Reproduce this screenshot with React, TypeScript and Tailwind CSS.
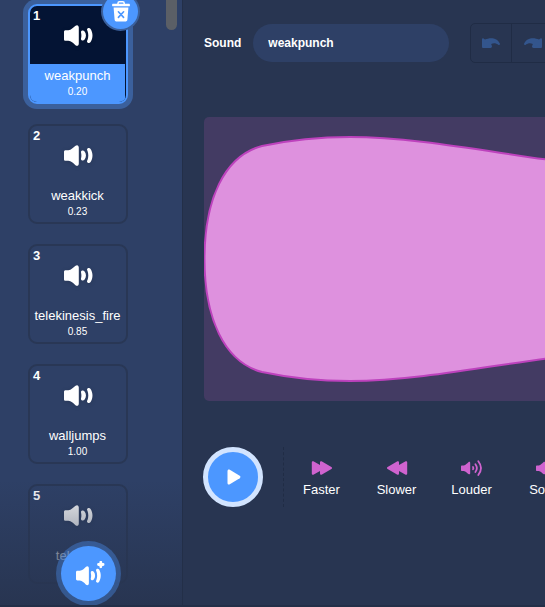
import { useState } from "react";

type Sound = { name: string; duration: string };

const sounds: Sound[] = [
  { name: "weakpunch", duration: "0.20" },
  { name: "weakkick", duration: "0.23" },
  { name: "telekinesis_fire", duration: "0.85" },
  { name: "walljumps", duration: "1.00" },
  { name: "teleport", duration: "0.92" },
];

function SpeakerShape() {
  return (
    <>
      <path d="M1.6 5.2H4.4C7.2 4.8 9.3 2.8 11.2 1 13 -.6 14.8 .2 14.8 2.6V18.4C14.8 20.8 13 21.6 11.2 20 9.3 18.2 7.2 16.2 4.4 15.8H1.6C.6 15.8 0 15.2 0 14.2V6.8C0 5.8.6 5.2 1.6 5.2Z" />
      <path d="M17 6.8C17.2 5.4 19.4 5 20.4 6.2 22.5 8.6 22.5 12.4 20.4 14.8 19.4 16 17.2 15.6 17 14.2 16.9 13.2 17.4 12.4 17.4 10.5S16.9 7.8 17 6.8Z" />
      <path d="M23 4.6C22.8 2.9 25.5 2.2 26.6 3.9 29.1 7.7 29.1 13.3 26.6 17.1 25.5 18.8 22.8 18.1 23 16.4 23.1 15.4 24.3 14 24.3 10.5S23.1 5.6 23 4.6Z" />
    </>
  );
}

function TrashIcon() {
  return (
    <svg viewBox="0 0 18 21" className="h-[21px] w-[18px]" aria-hidden="true">
      <path d="M6 3V2.2C6 1.2 6.6.8 7.4.8H10.8C11.6.8 12.2 1.2 12.2 2.2V3" fill="none" stroke="#fff" strokeWidth="1.5" />
      <path d="M1.2 2.7H16.8C17.5 2.7 17.9 3.1 17.9 3.8V4.4C17.9 5 17.5 5.3 16.8 5.3H1.2C.5 5.3.1 5 .1 4.4V3.8C.1 3.1.5 2.7 1.2 2.7ZM1.6 6.5H16.4L15.4 18.4C15.3 19.8 14.5 20.6 13 20.6H5C3.5 20.6 2.7 19.8 2.6 18.4Z" fill="#fff" />
      <path d="M6.4 10.8L11.6 16.4M11.6 10.8L6.4 16.4" stroke="#4c97ff" strokeWidth="1.6" strokeLinecap="round" />
    </svg>
  );
}

function UndoIcon({ flipped = false }: { flipped?: boolean }) {
  return (
    <svg viewBox="0 0 18 10" className="h-[10px] w-[18px]" fill="#33558c" aria-hidden="true">
      <path
        transform={flipped ? "matrix(-1 0 0 1 18 0)" : undefined}
        d="M0 1.2C0 .2 1.2 0 1.8.8L3 1.6C8-1 15.5-.4 17.9 5.6 18.1 6.9 17 7.4 16.2 6.8 14 5 11.6 4.8 9.2 6L9.8 7.8C10.2 8.8 9.8 10 8.4 10H1.4C.5 10 0 9.5 0 8.5Z"
      />
    </svg>
  );
}

function FastIcon({ flipped = false }: { flipped?: boolean }) {
  return (
    <svg viewBox="0 0 22 16" className="h-4 w-[22px]" fill="#cf63cf" aria-hidden="true">
      <path
        transform={flipped ? "matrix(-1 0 0 1 22 0)" : undefined}
        d="M.8 2.6C.8 1.5 1.8.9 2.8 1.6L9 5V2.6C9 1.5 10 .9 11 1.6L20.4 7C21.3 7.6 21.3 8.4 20.4 9L11 14.4C10 15.1 9 14.5 9 13.4V11L2.8 14.4C1.8 15.1.8 14.5.8 13.4Z"
      />
    </svg>
  );
}

function VolumeIcon({ waves }: { waves: number }) {
  return (
    <svg viewBox="0 0 22 16" className="h-4 w-[22px]" aria-hidden="true">
      <path d="M1 5.4H2.8C4.8 5 6 3.3 7.4 2.2 8.4 1.4 9.2 1.8 9.2 3V13.2C9.2 14.3 8.4 14.7 7.4 14 6 12.8 4.8 11.3 2.8 10.9H1C.4 10.9 0 10.5 0 9.9V6.4C0 5.8.4 5.4 1 5.4Z" fill="#cf63cf" />
      <g fill="none" stroke="#cf63cf" strokeLinecap="round" strokeWidth="1.8">
        <path d="M12 6.9Q12.8 8.1 12 9.3" />
        {waves > 1 && <path d="M14.4 4.2Q17.4 8.1 14.4 12" />}
        {waves > 2 && <path d="M17.3 1.2Q22.7 8.1 17.3 15" />}
      </g>
    </svg>
  );
}

function SoundCard({ sound, index, selected, onSelect }: { sound: Sound; index: number; selected: boolean; onSelect: () => void }) {
  return (
    <li className="relative size-[100px] shrink-0">
      <button
        type="button"
        onClick={onSelect}
        className={
          "relative flex size-full flex-col overflow-hidden rounded-[9px] border-2 " +
          (selected ? "border-[#4c97ff] bg-[#041434] ring-[5px] ring-[#3b609c]" : "border-[#293755]")
        }
      >
        <span className="absolute top-0 left-[3px] text-[13px] leading-5 font-bold">{index + 1}</span>
        <span className="flex h-[58px] w-full shrink-0 items-center justify-center">
          <svg viewBox="0 0 29 21" className="h-[21px] w-[29px] drop-shadow-sm" fill="currentColor" aria-hidden="true">
            <SpeakerShape />
          </svg>
        </span>
        <span className={"flex w-[95px] flex-1 flex-col items-center pt-1 " + (selected ? "bg-[#4c97ff]" : "")}>
          <span className="text-[13px] leading-4">{sound.name}</span>
          <span className="text-[10px] leading-4">{sound.duration}</span>
        </span>
      </button>
      {selected && (
        <button
          type="button"
          aria-label="Delete sound"
          className="absolute -top-2.5 -right-2.5 flex size-[35px] items-center justify-center rounded-full bg-[#4c97ff] ring-2 ring-[#3b609c]"
        >
          <TrashIcon />
        </button>
      )}
    </li>
  );
}

const effects = [
  { label: "Faster", icon: <FastIcon /> },
  { label: "Slower", icon: <FastIcon flipped /> },
  { label: "Louder", icon: <VolumeIcon waves={3} /> },
  { label: "Softer", icon: <VolumeIcon waves={2} /> },
];

export default function App() {
  const [selected, setSelected] = useState(0);
  const [name, setName] = useState("weakpunch");

  return (
    <div className="flex h-screen overflow-hidden border-b-2 border-[#232f48] bg-[#283551] font-['Liberation_Sans',Arial,sans-serif] text-white">
      <aside className="relative w-[183px] shrink-0 overflow-hidden border-r border-[#232f48] bg-[#2e4066]">
        <ul className="flex flex-col gap-5 pt-1 pl-7">
          {sounds.map((sound, i) => (
            <SoundCard key={sound.name} sound={sound} index={i} selected={i === selected} onSelect={() => setSelected(i)} />
          ))}
        </ul>
        <div className="absolute top-0 right-[5px] h-[30px] w-[11px] rounded-b-full bg-[#5b5f66]" />
        <div className="pointer-events-none absolute inset-x-0 bottom-0 h-[125px] bg-linear-to-b from-[#283551]/0 to-[#283551]" />
        <button
          type="button"
          aria-label="Choose a sound"
          className="absolute bottom-1 left-[61px] flex size-[55px] items-center justify-center rounded-full bg-[#4c97ff] ring-[5px] ring-[#4c97ff]/35"
        >
          <svg viewBox="0 0 29 26" className="ml-1 h-[26px] w-[29px]" aria-hidden="true">
            <g fill="#fff" transform="translate(0 5) scale(.87 .92)">
              <SpeakerShape />
            </g>
            <path d="M24.8 1.2V5.8M22.5 3.5H27.1" stroke="#fff" strokeWidth="2.8" strokeLinecap="round" />
          </svg>
        </button>
      </aside>

      <main className="min-w-0 flex-1 overflow-hidden pt-[23px] pl-5">
        <div className="flex items-center pl-px">
          <label htmlFor="sound-name" className="text-[12px] font-bold">
            Sound
          </label>
          <input
            id="sound-name"
            value={name}
            onChange={(e) => setName(e.target.value)}
            className="ml-3 h-[38px] w-[196px] shrink-0 rounded-full bg-[#2e4066] px-[15px] text-[12px] font-bold outline-none"
          />
          <div className="ml-[21px] flex h-10 shrink-0 divide-x divide-[#202c45] rounded-[5px] border border-[#202c45]">
            <button type="button" aria-label="Undo" className="flex w-[41px] items-center justify-center">
              <UndoIcon />
            </button>
            <button type="button" aria-label="Redo" className="flex w-[41px] items-center justify-center">
              <UndoIcon flipped />
            </button>
          </div>
        </div>

        <div className="mt-[54px] ml-px h-[284px] overflow-hidden rounded-l-[5px] bg-[#433b63]">
          <svg viewBox="0 0 700 284" className="h-[284px] w-[700px] max-w-none" role="img" aria-label="Waveform">
            <path
              d="M.5 142C.5 83 20 39 58 29C84 23.5 118 20 146 20C208 20 280 34 342 42.5C460 60 580 90 700 120V164C580 194 460 224 342 241.5C280 250 208 264 146 264C118 264 84 260.5 58 255C20 245 .5 201 .5 142Z"
              fill="#de91de"
              stroke="#bd42bd"
              strokeWidth="2"
            />
          </svg>
        </div>

        <div className="mt-[46px] flex items-center">
          <button
            type="button"
            aria-label="Play"
            className="flex size-[60px] shrink-0 items-center justify-center rounded-full border-[5px] border-[#d2e4ff] bg-[#4c97ff]"
          >
            <svg viewBox="0 0 14 16" className="ml-0.5 h-4 w-3.5" aria-hidden="true">
              <path d="M.5 2C.5.6 1.6.1 2.8.7L12.7 6.8C13.7 7.5 13.7 8.5 12.7 9.2L2.8 15.3C1.6 15.9.5 15.4.5 14Z" fill="#fff" />
            </svg>
          </button>
          <div className="ml-5 h-[60px] border-l border-dashed border-[#202c45]" />
          {effects.map(({ label, icon }) => (
            <button key={label} type="button" className="flex w-[75px] shrink-0 flex-col items-center gap-1.5 pt-1 text-[13px] leading-4">
              {icon}
              {label}
            </button>
          ))}
        </div>
      </main>
    </div>
  );
}
